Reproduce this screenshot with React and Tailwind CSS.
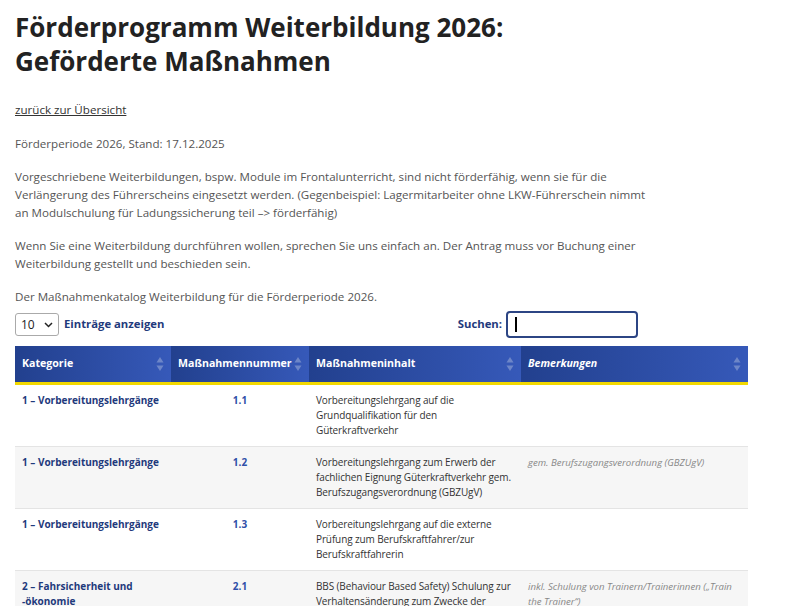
import React from 'react';

const rows = [
  {
    kat: '1\u00a0– Vorbereitungslehrgänge',
    nr: '1.1',
    inhalt: 'Vorbereitungslehrgang auf die Grundqualifikation für den Güterkraftverkehr',
    bem: '',
  },
  {
    kat: '1\u00a0– Vorbereitungslehrgänge',
    nr: '1.2',
    inhalt: 'Vorbereitungslehrgang zum Erwerb der fachlichen Eignung Güterkraftverkehr gem. Berufszugangsverordnung (GBZUgV)',
    bem: 'gem. Berufszugangsverordnung (GBZUgV)',
  },
  {
    kat: '1\u00a0– Vorbereitungslehrgänge',
    nr: '1.3',
    inhalt: 'Vorbereitungslehrgang auf die externe Prüfung zum Berufskraftfahrer/zur Berufskraftfahrerin',
    bem: '',
  },
  {
    kat: '2\u00a0– Fahrsicherheit und -ökonomie',
    nr: '2.1',
    inhalt: 'BBS (Behaviour Based Safety) Schulung zur Verhaltensänderung zum Zwecke der Unfallvermeidung',
    bem: 'inkl. Schulung von Trainern/Trainerinnen („Train the Trainer“)',
  },
];

const SortIcon = () => (
  <svg width="8" height="16" viewBox="0 0 8 16" className="shrink-0">
    <path d="M4 1 L7.5 6.5 H0.5 Z" fill="#6d86c8" />
    <path d="M4 15 L7.5 9.5 H0.5 Z" fill="#6d86c8" />
  </svg>
);

const HeadCell = ({ children, italic }) => (
  <th className="h-[37px] px-[7px] text-left font-bold text-white text-[10.6px] bg-gradient-to-r from-[#22408e] to-[#3659b9]">
    <div className="flex items-center justify-between">
      <span className={italic ? 'italic' : ''}>{children}</span>
      <SortIcon />
    </div>
  </th>
);

export default function App() {
  return (
    <div
      className="bg-white min-h-screen px-[15px] pt-[10px] text-[#555]"
      style={{ fontFamily: '"Open Sans", "Liberation Sans", sans-serif' }}
    >
      <h1 className="text-[26px] leading-[34px] font-bold text-[#222]">
        Förderprogramm Weiterbildung 2026:
        <br />
        Geförderte Maßnahmen
      </h1>

      <div className="w-[640px] text-[11.6px] leading-[18px] mt-[23px]">
        <p>
          <a href="#" className="underline text-[#333]">zurück zur Übersicht</a>
        </p>
        <p className="mt-[16px]">Förderperiode 2026, Stand: 17.12.2025</p>
        <p className="mt-[15px]">
          Vorgeschriebene Weiterbildungen, bspw. Module im Frontalunterricht, sind nicht förderfähig, wenn sie für die
          Verlängerung des Führerscheins eingesetzt werden. (Gegenbeispiel: Lagermitarbeiter ohne LKW-Führerschein nimmt
          an Modulschulung für Ladungssicherung teil –&gt; förderfähig)
        </p>
        <p className="mt-[15px]">
          Wenn Sie eine Weiterbildung durchführen wollen, sprechen Sie uns einfach an. Der Antrag muss vor Buchung einer
          Weiterbildung gestellt und beschieden sein.
        </p>
        <p className="mt-[15px]">Der Maßnahmenkatalog Weiterbildung für die Förderperiode 2026.</p>
      </div>

      <div className="w-[623px] flex items-center justify-between mt-[5px]">
        <div className="flex items-center gap-[5px]">
          <div className="w-[44px] h-[23px] border border-[#aaa] rounded-[3px] flex items-center justify-between px-[5px] text-[12px] text-[#222]">
            <span>10</span>
            <svg width="9" height="6" viewBox="0 0 9 6">
              <path d="M1 1 L4.5 4.5 L8 1" stroke="#222" strokeWidth="1.5" fill="none" />
            </svg>
          </div>
          <span className="text-[11.3px] font-bold text-[#1f3a7c]">Einträge anzeigen</span>
        </div>
        <div className="flex items-center gap-[4px]">
          <span className="text-[11.3px] font-bold text-[#1f3a7c]">Suchen:</span>
          <div className="w-[132px] h-[27px] border-2 border-[#2c4584] rounded-[4px] flex items-center pl-[7px]">
            <div className="w-[1.5px] h-[15px] bg-black" />
          </div>
        </div>
      </div>

      <table className="w-[733px] mt-[8px] border-collapse table-fixed">
        <colgroup>
          <col className="w-[156px]" />
          <col className="w-[138px]" />
          <col className="w-[212px]" />
          <col className="w-[227px]" />
        </colgroup>
        <thead>
          <tr className="border-b-[3px] border-[#f2d800]">
            <HeadCell>Kategorie</HeadCell>
            <HeadCell>Maßnahmennummer</HeadCell>
            <HeadCell>Maßnahmeninhalt</HeadCell>
            <HeadCell italic>Bemerkungen</HeadCell>
          </tr>
        </thead>
        <tbody>
          {rows.map((r, i) => (
            <tr
              key={i}
              className={(i % 2 === 1 ? 'bg-[#f6f6f6] ' : 'bg-white ') + 'border-b border-[#e4e4e4] align-top'}
            >
              <td className="px-[7px] pt-[8px] pb-[8px] text-[10px] leading-[15px] font-bold text-[#1f3a7c]">
                {r.kat}
              </td>
              <td className="px-[7px] pt-[8px] pb-[8px] text-[10px] leading-[15px] font-bold text-[#2f4fa8] text-center">
                {r.nr}
              </td>
              <td className="pl-[7px] pr-[4px] pt-[8px] pb-[8px] text-[10px] leading-[15px] tracking-[-0.12px] text-[#333]">
                {r.inhalt}
              </td>
              <td className="px-[7px] pt-[8px] pb-[8px] text-[9.6px] leading-[15px] italic text-[#888]">{r.bem}</td>
            </tr>
          ))}
        </tbody>
      </table>
    </div>
  );
}
